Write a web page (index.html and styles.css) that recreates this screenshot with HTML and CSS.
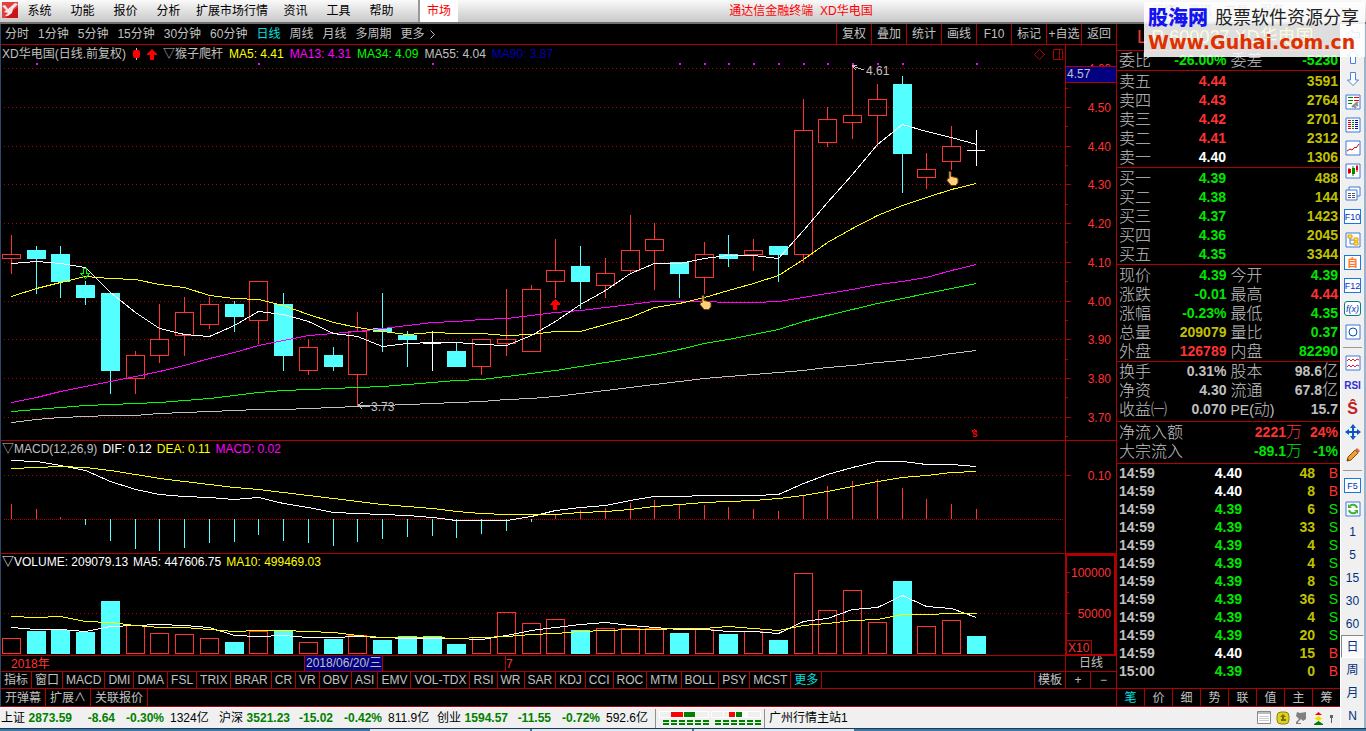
FILE: index.html
```html
<!DOCTYPE html>
<html lang="zh-CN">
<head>
  <meta charset="UTF-8">
  <meta name="viewport" content="width=device-width, initial-scale=1">
  <title>通达信金融终端 XD华电国</title>
  <link rel="stylesheet" href="styles.css">
</head>
<body>

  <!-- 顶部菜单 -->
  <header class="menubar">
    <svg class="logo" width="16" height="16" viewBox="0 0 16 16">
      <rect width="16" height="16" fill="#c81414"/>
      <path d="M0 0h16v5L9 10 4 16H0z" fill="#e04040"/>
      <path d="M0 4l3-1 3 4 7-6 3 1-5 5-1 4-4 3H3l3-3-4-1 2-2z" fill="#f4e4e4"/>
    </svg>
    <nav class="menu">
      <button>系统</button>
      <button>功能</button>
      <button>报价</button>
      <button>分析</button>
      <button>扩展市场行情</button>
      <button>资讯</button>
      <button>工具</button>
      <button>帮助</button>
    </nav>
    <button class="market">市场</button>
    <h1 class="app-title">通达信金融终端&nbsp; XD华电国</h1>
    <div class="window-tools">
      <button>行情</button>
      <button>资讯</button>
      <button>交易</button>
      <button>服务</button>
      <button>—</button>
      <button>□</button>
      <button>✕</button>
    </div>
  </header>

  <div class="workspace">
    <div class="main">
      <div class="desk">

        <!-- 图表区 -->
        <section class="charts">
          <div class="periods">
            <button>分时</button>
            <button>1分钟</button>
            <button>5分钟</button>
            <button>15分钟</button>
            <button>30分钟</button>
            <button>60分钟</button>
            <button class="active">日线</button>
            <button>周线</button>
            <button>月线</button>
            <button>多周期</button>
            <button class="more">更多
              <svg width="5" height="9" viewBox="0 0 5 9"><path d="M.5.500l4 4-4 4" fill="none" stroke="#c0c0c0"/></svg>
            </button>
            <div class="chart-actions">
              <button>复权</button>
              <button>叠加</button>
              <button>统计</button>
              <button>画线</button>
              <button>F10</button>
              <button>标记</button>
              <button>+自选</button>
              <button>返回</button>
            </div>
          </div>

          <div class="panel">
            <div class="plot">
              <div class="legend legend-main">
                <span>XD华电国(日线.前复权)</span>
                <svg class="mark-pill" width="9" height="12" viewBox="0 0 9 12"><path d="M4 0h1v12H4z" fill="#c0c0c0"/><rect x="1" y="2" width="7" height="8" rx="2" fill="#f00"/></svg>
                <svg class="mark-up" width="10" height="11" viewBox="0 0 10 11"><path d="M5 0l5 5v1H7v5H3V6H0V5z" fill="#f00"/></svg>
                <span>▽猴子爬杆</span>
                <span class="yellow">MA5: 4.41</span>
                <span class="magenta">MA13: 4.31</span>
                <span class="lime">MA34: 4.09</span>
                <span>MA55: 4.04</span>
                <span class="blue">MA90: 3.87</span>
                <svg class="mark-right" width="29" height="11" viewBox="0 0 29 11" fill="none" stroke="#b00000"><path d="M.5 5.500l5-5 5 5-5 5zM19.500.500h9v10h-9zM25.500.500v10"/></svg>
              </div>
              <svg id="kline" class="canvas" height="377"></svg>
            </div>
            <svg id="klineAxis" class="axis" height="395"></svg>
          </div>

          <div class="panel">
            <div class="plot">
              <div class="legend">
                <span>▽MACD(12,26,9)</span>
                <span class="white">DIF: 0.12</span>
                <span class="yellow">DEA: 0.11</span>
                <span class="magenta">MACD: 0.02</span>
              </div>
              <svg id="macd" class="canvas" height="96"></svg>
            </div>
            <svg id="macdAxis" class="axis" height="112"></svg>
          </div>

          <div class="panel">
            <div class="plot">
              <div class="legend">
                <span class="white">▽VOLUME: 209079.13</span>
                <span class="white">MA5: 447606.75</span>
                <span class="yellow">MA10: 499469.03</span>
              </div>
              <svg id="volume" class="canvas" height="85"></svg>
            </div>
            <svg id="volumeAxis" class="axis selected" height="101"></svg>
          </div>

          <div class="panel">
            <svg id="dates" class="canvas" height="15"></svg>
            <div class="axis axis-name">日线</div>
          </div>

          <div class="tabs">
            <button>指标</button>
            <button>窗口</button>
            <button>MACD</button>
            <button>DMI</button>
            <button>DMA</button>
            <button>FSL</button>
            <button>TRIX</button>
            <button>BRAR</button>
            <button>CR</button>
            <button>VR</button>
            <button>OBV</button>
            <button>ASI</button>
            <button>EMV</button>
            <button>VOL-TDX</button>
            <button>RSI</button>
            <button>WR</button>
            <button>SAR</button>
            <button>KDJ</button>
            <button>CCI</button>
            <button>ROC</button>
            <button>MTM</button>
            <button>BOLL</button>
            <button>PSY</button>
            <button>MCST</button>
            <button class="active">更多</button>
            <div class="tab-tools">
              <button>模板</button>
              <button class="zoom">+</button>
              <button class="zoom">−</button>
            </div>
          </div>
          <div class="tabs tabs-extra">
            <button>开弹幕</button>
            <button>扩展∧</button>
            <button>关联报价</button>
          </div>
        </section>

        <!-- 报价区 -->
        <aside class="quote">
          <h2 class="stock"><b>L</b> R 600027 XD华电国</h2>

          <table class="grid ratio">
            <tr><th>委比</th><td class="green">-26.00%</td><th>委差</th><td class="green">-5230</td></tr>
          </table>

          <table class="grid five">
            <tr><th>卖五</th><td class="red">4.44</td><td colspan="2" class="gold">3591</td></tr>
            <tr><th>卖四</th><td class="red">4.43</td><td colspan="2" class="gold">2764</td></tr>
            <tr><th>卖三</th><td class="red">4.42</td><td colspan="2" class="gold">2701</td></tr>
            <tr><th>卖二</th><td class="red">4.41</td><td colspan="2" class="gold">2312</td></tr>
            <tr><th>卖一</th><td class="white">4.40</td><td colspan="2" class="gold">1306</td></tr>
          </table>

          <table class="grid five">
            <tr><th>买一</th><td class="green">4.39</td><td colspan="2" class="gold">488</td></tr>
            <tr><th>买二</th><td class="green">4.38</td><td colspan="2" class="gold">144</td></tr>
            <tr><th>买三</th><td class="green">4.37</td><td colspan="2" class="gold">1423</td></tr>
            <tr><th>买四</th><td class="green">4.36</td><td colspan="2" class="gold">2045</td></tr>
            <tr><th>买五</th><td class="green">4.35</td><td colspan="2" class="gold">3344</td></tr>
          </table>

          <table class="grid five">
            <tr><th>现价</th><td class="green">4.39</td><th>今开</th><td class="green">4.39</td></tr>
            <tr><th>涨跌</th><td class="green">-0.01</td><th>最高</th><td class="red">4.44</td></tr>
            <tr><th>涨幅</th><td class="green">-0.23%</td><th>最低</th><td class="green">4.35</td></tr>
            <tr><th>总量</th><td class="gold">209079</td><th>量比</th><td class="green">0.37</td></tr>
            <tr><th>外盘</th><td class="red">126789</td><th>内盘</th><td class="green">82290</td></tr>
          </table>

          <table class="grid three">
            <tr><th>换手</th><td>0.31%</td><th>股本</th><td>98.6<i>亿</i></td></tr>
            <tr><th>净资</th><td>4.30</td><th>流通</th><td>67.8<i>亿</i></td></tr>
            <tr><th>收益㈠</th><td>0.070</td><th><b>PE(</b>动<b>)</b></th><td>15.7</td></tr>
          </table>

          <table class="flow">
            <tr class="red"><th>净流入额</th><td>2221<i>万</i></td><td>24%</td></tr>
            <tr class="green"><th>大宗流入</th><td>-89.1<i>万</i></td><td>-1%</td></tr>
          </table>

          <table class="ticks">
            <tr><th>14:59</th><td class="white">4.40</td><td class="gold">48</td><td class="side red">B</td></tr>
            <tr><th>14:59</th><td class="white">4.40</td><td class="gold">8</td><td class="side red">B</td></tr>
            <tr><th>14:59</th><td class="green">4.39</td><td class="gold">6</td><td class="side green">S</td></tr>
            <tr><th>14:59</th><td class="green">4.39</td><td class="gold">33</td><td class="side green">S</td></tr>
            <tr><th>14:59</th><td class="green">4.39</td><td class="gold">4</td><td class="side green">S</td></tr>
            <tr><th>14:59</th><td class="green">4.39</td><td class="gold">4</td><td class="side green">S</td></tr>
            <tr><th>14:59</th><td class="green">4.39</td><td class="gold">8</td><td class="side green">S</td></tr>
            <tr><th>14:59</th><td class="green">4.39</td><td class="gold">36</td><td class="side green">S</td></tr>
            <tr><th>14:59</th><td class="green">4.39</td><td class="gold">4</td><td class="side green">S</td></tr>
            <tr><th>14:59</th><td class="green">4.39</td><td class="gold">20</td><td class="side green">S</td></tr>
            <tr><th>14:59</th><td class="white">4.40</td><td class="gold">15</td><td class="side red">B</td></tr>
            <tr><th>15:00</th><td class="green">4.39</td><td class="gold">0</td><td class="side red">B</td></tr>
          </table>

          <div class="quote-tabs">
            <button class="active">笔</button>
            <button>价</button>
            <button>细</button>
            <button>势</button>
            <button>联</button>
            <button>值</button>
            <button>主</button>
            <button>筹</button>
          </div>
        </aside>
      </div>

      <!-- 状态栏 -->
      <footer class="status">
        <div class="index"><span>上证</span><b>2873.59</b><b>-8.64</b><b>-0.30%</b><span>1324亿</span></div>
        <div class="index"><span>沪深</span><b>3521.23</b><b>-15.02</b><b>-0.42%</b><span>811.9亿</span></div>
        <div class="index"><span>创业</span><b>1594.57</b><b>-11.55</b><b>-0.72%</b><span>592.6亿</span></div>
        <div class="meters">
          <svg width="50" height="15" viewBox="0 0 50 15" shape-rendering="crispEdges">
            <path d="M0 0h50v7H0z" fill="#fff"/><path d="M1 1h11v5H1zM37 1h12v5H37z" fill="#f0f0f0"/>
            <path d="M12 1h12v5H12z" fill="#f00"/><path d="M25 1h11v5H25z" fill="#008000"/>
            <path d="M4 10h46M4 13h46" stroke="#008000" stroke-width="2" stroke-dasharray="6 2"/>
          </svg>
          <svg width="50" height="15" viewBox="0 0 50 15" shape-rendering="crispEdges">
            <path d="M0 0h50v7H0z" fill="#fff"/><path d="M1 1h11v5H1zM13 1h5v5h-5zM37 1h12v5H37z" fill="#f0f0f0"/>
            <path d="M18 1h6v5h-6z" fill="#f00"/><path d="M25 1h6v5h-6z" fill="#008000"/>
            <path d="M4 10h46M4 13h46" stroke="#008000" stroke-width="2" stroke-dasharray="6 2"/>
          </svg>
        </div>
        <span class="server">广州行情主站1</span>
        <div class="tray">
          <svg width="14" height="14" viewBox="0 0 14 14"><path d="M.5.500h13v12H.5z" fill="#fff" stroke="#888"/><path d="M1 1h12v2H1z" fill="#bbb"/><path d="M2 5.500h10M2 7.500h10M2 9.500h10" stroke="#ccc"/></svg>
          <svg width="14" height="14" viewBox="0 0 14 14"><rect x="1" y="1" width="12" height="12" rx="4" fill="#e0d020" stroke="#8c8410"/><path d="M7 3l3 3H8v2h2v2H5V8h1V6H4z" fill="#7a7000"/></svg>
          <svg width="14" height="14" viewBox="0 0 14 14"><path d="M2 1l3 1 6-1v7l-3 2-2-2-3 3v1h3v1H1v-2l3-3-3-3z" fill="#808080"/></svg>
          <svg width="9" height="13" viewBox="0 0 9 13"><path d="M4.500 0l3.500 3H1z" fill="#f00"/><path d="M0 6h2l2.500-2L7 6h2L4.500 9z" fill="#f0e000"/><path d="M4.500 9l4.500 3v1H0v-1z" fill="#008000"/></svg>
          <svg width="7" height="13" viewBox="0 0 7 13"><path d="M2 3h3v3H4v5H3V6H2z" fill="#606060"/></svg>
        </div>
      </footer>
    </div>

    <!-- 右侧工具条 -->
    <nav class="toolbar">
      <div class="arrows">
        <button aria-label="后退"><svg width="16" height="16" viewBox="0 0 16 16" fill="#fff" stroke="#4a80e0"><path d="M1.500 8l6-5.500v3h7v5h-7v3z"/></svg></button>
        <button aria-label="上翻"><svg width="16" height="16" viewBox="0 0 16 16" fill="#fff" stroke="#4a80e0"><path d="M8 1.500L13.500 7h-3v7.500h-5V7h-3z"/></svg></button>
        <button aria-label="下翻"><svg width="16" height="16" viewBox="0 0 16 16" fill="#fff" stroke="#4a80e0"><path d="M8 14.500L13.500 9h-3V1.500h-5V9h-3z"/></svg></button>
      </div>
      <button aria-label="报价"><svg width="16" height="16" viewBox="0 0 16 16"><path class="frame" d="M1 1h14v14H1z"/><path d="M3 3.500h5M3 6.500h5M3 9.500h4" stroke="#080"/><path d="M9 3.500h5M9 6.500h5" stroke="#e00"/><path d="M7 13l6-5M8 11l3 3M10 9l3 3" stroke="#888" stroke-width="2"/></svg></button>
      <button aria-label="行情"><svg width="16" height="16" viewBox="0 0 16 16"><path class="frame" d="M1 1h14v14H1z"/><path d="M3 3.500h3M3 5.500h3M3 7.500h3M3 9.500h3M3 11.500h3" stroke="#e00"/><path d="M7 3.500h2M7 5.500h2M7 7.500h2M7 9.500h2M7 11.500h2" stroke="#080"/><path d="M10 3.500h3M10 5.500h3M10 7.500h3M10 9.500h3M10 11.500h3" stroke="#00d"/></svg></button>
      <button aria-label="分时图"><svg width="16" height="16" viewBox="0 0 16 16"><path class="frame" d="M1 1h14v14H1z"/><path d="M2 11l3-2 2 1 3-3 1 1 3-4" fill="none" stroke="#d00"/></svg></button>
      <button aria-label="K线图"><svg width="16" height="16" viewBox="0 0 16 16"><path class="frame" d="M1 1h14v14H1z"/><path d="M4 5v6M12 2v7" stroke="#d00"/><path d="M3 6h3v4H3zM11 3h2v4h-2z" fill="#d00"/><path d="M8 3v10" stroke="#080"/><path d="M7 5h3v6H7z" fill="#080"/></svg></button>
      <button aria-label="多窗口"><svg width="16" height="16" viewBox="0 0 16 16"><path class="frame" d="M4 1h11v9H4z"/><path class="frame" d="M1 4h11v10H1z"/><path d="M3 7.500h3M3 9.500h3M3 11.500h3M7 7.500h3M7 9.500h3M7 11.500h3" stroke="#556"/></svg></button>
      <button class="key">F10</button>
      <button aria-label="板块树"><svg width="16" height="16" viewBox="0 0 16 16"><path class="frame" d="M1 1h14v14H1z"/><path d="M5 6v6h4M5 8h4" fill="none" stroke="#4a80e0"/><path d="M3 3h4v3H3zM9 6h4v3H9zM9 10h4v3H9z" fill="#ffe060" stroke="#e0a000"/></svg></button>
      <button class="key self">自</button>
      <button class="key">F12</button>
      <button class="key formula">f(x)</button>
      <button aria-label="圆"><svg width="16" height="16" viewBox="0 0 16 16"><path class="frame" d="M1 1h14v14H1z"/><circle cx="8" cy="8" r="4" fill="none" stroke="#0050b0"/></svg></button>
      <hr>
      <button aria-label="指标"><svg width="16" height="16" viewBox="0 0 16 16"><path class="frame" d="M1 1h14v14H1z"/><path d="M2 6l2-2 2 2 2-2 2 2 2-2 2 1" fill="none" stroke="#e02020"/><path d="M2 12l2-2 2 2 2-2 2 2 2-2 2 1" fill="none" stroke="#d02040"/></svg></button>
      <button class="rsi">RSI</button>
      <button class="dollar">Ŝ</button>
      <button aria-label="移动"><svg width="16" height="16" viewBox="0 0 16 16"><path d="M8 0l3 4H9v3h3V5l4 3-4 3V9H9v3h2l-3 4-3-4h2V9H4v2L0 8l4-3v2h3V4H5z" fill="#0a58c0"/></svg></button>
      <button aria-label="画笔"><svg width="16" height="16" viewBox="0 0 16 16"><path d="M2 14l1-4 7-7 3 3-7 7z" fill="#f0a030" stroke="#805010"/><path d="M10 3l2-2 3 3-2 2z" fill="#e06050"/><path d="M2 14l1-2 1 1z" fill="#222"/></svg></button>
      <hr>
      <button class="key">F5</button>
      <button aria-label="刷新"><svg width="16" height="16" viewBox="0 0 16 16"><path class="frame" d="M1 1h14v14H1z"/><path d="M12 7c-1-4-6-4-7-2M4 9c1 4 6 4 7 2" fill="none" stroke="#3cb034" stroke-width="2"/><path d="M3 3v4h4zM13 13V9H9z" fill="#3cb034"/></svg></button>
      <button>1</button>
      <button>5</button>
      <button>15</button>
      <button>30</button>
      <button>60</button>
      <button class="pressed">日</button>
      <button>周</button>
      <button>月</button>
      <button>N</button>
    </nav>
  </div>

  <div class="taskbar"><span></span><span></span><span></span></div>

  <!-- 水印 -->
  <div class="watermark">
    <div class="wm-top"><strong>股海网</strong><span>股票软件资源分享</span></div>
    <div class="wm-url">Www.Guhai.com.cn</div>
  </div>

  <script src="chart.js"></script>
</body>
</html>
```
FILE: styles.css
```css
* {
  box-sizing: border-box;
}

body {
  margin: 0;
  min-height: 100vh;
  display: flex;
  flex-direction: column;
  position: relative;
  background: #000;
  color: #c0c0c0;
  font-family: "Liberation Sans", "Noto Sans CJK SC", sans-serif;
  font-size: 12px;
  line-height: 16px;
}

button {
  margin: 0;
  padding: 0;
  border: 0;
  background: none;
  color: inherit;
  font: inherit;
  white-space: nowrap;
  cursor: pointer;
}

svg {
  display: block;
  flex: none;
}

/* 颜色 */
.red { color: #ff3232; }
.green { color: #00e600; }
.gold { color: #c0c000; }
.white { color: #fff; }
.yellow { color: #ff0; }
.magenta { color: #f0f; }
.lime { color: #0f0; }
.blue { color: #0000b4; }
.active { color: #00e0e0; }

/* 顶部菜单 */
.menubar {
  height: 24px;
  display: flex;
  align-items: stretch;
  padding-left: 2px;
  background: linear-gradient(#fafafa, #c8c8c8);
  border-bottom: 2px solid #707070;
  color: #000;
}

.logo {
  margin-top: 2px;
}

.menu {
  display: flex;
}

.menu button {
  min-width: 43px;
  padding: 0 6px;
}

.market {
  width: 40px;
  margin-left: 15px;
  background: #fff;
  border-left: 2px solid #999;
  color: #f00;
}

.app-title {
  flex: 1;
  margin: 0;
  color: #f00;
  font-size: 12px;
  font-weight: normal;
  line-height: 22px;
  text-align: center;
}

.window-tools {
  width: 222px;
  display: flex;
  gap: 12px;
  padding-left: 8px;
  color: #707070;
}

/* 主体 */
.workspace {
  flex: 1;
  display: flex;
}

.main {
  flex: 1;
  min-width: 0;
  display: flex;
  flex-direction: column;
}

.desk {
  flex: 1;
  display: flex;
  border-left: 1px solid #304868;
  border-bottom: 1px solid #b00000;
}

.charts {
  flex: 1;
  min-width: 0;
}

.periods {
  height: 21px;
  display: flex;
  gap: 9px;
  padding-left: 4px;
  border-bottom: 1px solid #b00000;
}

.more {
  display: flex;
  align-items: center;
  gap: 5px;
}

.chart-actions {
  margin-left: auto;
  display: flex;
}

.chart-actions button {
  width: 35px;
  border-left: 1px solid #b00000;
}

.panel {
  display: flex;
  border-bottom: 1px solid #b00000;
}

.plot {
  flex: 1;
  min-width: 0;
}

.canvas {
  width: 100%;
  flex: 1;
  min-width: 0;
}

.axis {
  width: 51px;
  flex: none;
  border-left: 1px solid #b00000;
}

.axis.selected {
  border: 2px solid #b00000;
  border-bottom-width: 1px;
}

.axis-name {
  line-height: 15px;
  text-align: center;
}

.legend {
  height: 16px;
  display: flex;
  gap: 5px;
  padding-left: 1px;
  white-space: nowrap;
}

.legend-main {
  height: 18px;
  gap: 6px;
  align-items: center;
}

.mark-right {
  margin-left: auto;
  margin-right: 2px;
}

.canvas text,
.axis text {
  font-size: 12px;
}

.canvas .sell-mark {
  font-size: 10px;
  font-weight: bold;
}

/* 指标标签 */
.tabs {
  height: 17px;
  display: flex;
  border-bottom: 1px solid #b00000;
}

.tabs button {
  padding: 0 3px;
  border-right: 1px solid #b00000;
}

.tabs-extra {
  border-bottom: 0;
}

.tabs-extra button {
  padding: 0 4px;
}

.tab-tools {
  margin-left: auto;
  display: flex;
  border-left: 1px solid #b00000;
}

.tab-tools .zoom {
  width: 25px;
}

.tab-tools .zoom:last-child {
  border-right: 0;
}

/* 报价区 */
.quote {
  width: 224px;
  flex: none;
  display: flex;
  flex-direction: column;
  border-left: 1px solid #b00000;
}

.stock {
  height: 27px;
  margin: 0;
  padding-left: 20px;
  border-bottom: 1px solid #b00000;
  color: #e0e000;
  font-size: 18px;
  font-weight: normal;
  line-height: 26px;
  white-space: nowrap;
}

.stock b {
  color: #ff3232;
  font-weight: normal;
}

.quote table {
  width: 100%;
  table-layout: fixed;
  border-collapse: separate;
  border-spacing: 0;
  border-bottom: 1px solid #b00000;
}

.quote th,
.quote td {
  height: 19px;
  padding: 0;
  line-height: 19px;
  vertical-align: middle;
  white-space: nowrap;
}

.quote th {
  padding-left: 2px;
  color: #c0c0c0;
  font-size: 16px;
  font-weight: 300;
  text-align: left;
}

.quote td {
  padding-right: 2px;
  font-size: 14px;
  font-weight: bold;
  text-align: right;
}

.quote td i {
  font-size: 16px;
  font-style: normal;
  font-weight: 300;
  line-height: 1px;
}

.quote th b {
  font-size: 14px;
  line-height: 1px;
}

.grid th {
  width: 52px;
}

.grid td {
  width: 59px;
}

.grid td[colspan] {
  width: auto;
}

.five {
  padding-top: 1px;
}

.three {
  padding-bottom: 2px;
}

.flow {
  padding: 1px 0 2px;
}

.flow th {
  width: 80px;
}

.flow td:last-child {
  width: 36px;
}

.quote .ticks {
  border-bottom: 0;
}

.quote .ticks th,
.quote .ticks td {
  height: 18px;
  line-height: 18px;
}

.quote .ticks th {
  width: 50px;
  font-size: 14px;
  font-weight: bold;
}

.ticks td:nth-child(2) {
  width: 77px;
}

.quote .ticks .side {
  width: 23px;
  font-weight: normal;
}

.quote-tabs {
  height: 18px;
  margin-top: auto;
  display: flex;
  border-top: 1px solid #b00000;
}

.quote-tabs button {
  flex: 1;
  border-right: 1px solid #b00000;
}

.quote-tabs button:last-child {
  border-right: 0;
}

/* 状态栏 */
.status {
  height: 21px;
  display: flex;
  align-items: center;
  padding-left: 1px;
  background: #f0f0f0;
  border-top: 1px solid #fff;
  color: #000;
  white-space: nowrap;
}

.index {
  display: grid;
  grid-template-columns: 25px 46px 43px 49px 55px;
}

.index b {
  color: #008000;
  text-align: right;
}

.index span:last-child {
  padding-left: 6px;
}

.meters {
  display: flex;
  gap: 2px;
  padding: 2px 3px;
  border: solid #909090;
  border-width: 0 1px;
}

.server {
  padding-left: 4px;
}

.tray {
  margin-left: auto;
  display: flex;
  align-items: center;
  gap: 5px;
  padding-right: 5px;
}

/* 右侧工具条 */
.toolbar {
  width: 26px;
  flex: none;
  display: flex;
  flex-direction: column;
  background: #f0f0f0;
  border-left: 1px solid #fff;
  border-right: 2px solid #9ab4cc;
  color: #003080;
}

.toolbar button {
  width: 23px;
  height: 23px;
  display: flex;
  align-items: center;
  justify-content: center;
}

.toolbar .arrows button {
  height: 22px;
}

.toolbar hr {
  width: 19px;
  height: 1px;
  margin: 4px 2px 3px;
  border: 0;
  background: #999;
}

.frame {
  fill: #fff;
  stroke: #3a7ae0;
}

.toolbar .key {
  width: 17px;
  height: 15px;
  margin: 4px 3px;
  background: #fff;
  border: 1px solid #1878e0;
  color: #0030c0;
  font-size: 9px;
}

.toolbar .self {
  color: #ff7830;
  font-size: 11px;
  font-weight: bold;
}

.toolbar .formula {
  border-color: #008080;
  border-radius: 3px;
  font-style: italic;
}

.toolbar .rsi {
  color: #3030d0;
  font-size: 10px;
  font-weight: bold;
}

.toolbar .dollar {
  color: #c02020;
  font-size: 16px;
  font-weight: bold;
}

.toolbar .pressed {
  background: #fafafa;
  border: 1px solid #fff;
  border-top-color: #888;
  border-left-color: #888;
}

/* 任务栏 */
.taskbar {
  height: 3px;
  display: flex;
  gap: 2px;
  padding-left: 370px;
  background: #3a78a8;
  border-top: 1px solid #203850;
}

.taskbar span {
  width: 160px;
  background: #d8e8f4;
}

/* 水印 */
.watermark {
  position: absolute;
  top: 2px;
  right: 1px;
  width: 221px;
  height: 55px;
  padding: 4px 0 0 4px;
  background: rgba(255, 255, 255, 0.87);
  white-space: nowrap;
}

.wm-top {
  display: flex;
  align-items: center;
  gap: 7px;
  height: 24px;
}

.wm-top strong {
  color: #1414f0;
  font-size: 20px;
  font-weight: 900;
}

.wm-top span {
  color: #222;
  font-size: 18px;
}

.wm-url {
  color: #e03000;
  font-family: "DejaVu Sans", sans-serif;
  font-size: 19px;
  font-weight: bold;
  line-height: 24px;
}
```
FILE: chart.js
```js
const RED = '#ff3232';
const CYAN = '#54ffff';
const LINE = '#b00000';

// 开, 收, 低, 高
const bars = [
  [4.11, 4.12, 4.07, 4.17], [4.13, 4.11, 4.02, 4.14], [4.12, 4.05, 4.01, 4.14], [4.04, 4.01, 3.99, 4.05],
  [4.02, 3.82, 3.76, 4.02], [3.80, 3.86, 3.76, 3.87], [3.86, 3.90, 3.84, 3.99], [3.91, 3.97, 3.86, 4.01],
  [3.94, 3.99, 3.93, 4.01], [3.99, 3.96, 3.92, 4.00], [3.95, 4.05, 3.89, 4.05], [3.99, 3.86, 3.82, 4.02],
  [3.82, 3.88, 3.81, 3.90], [3.86, 3.83, 3.82, 3.88], [3.81, 3.92, 3.73, 3.97], [3.93, 3.92, 3.87, 4.02],
  [3.91, 3.90, 3.83, 3.92], [3.89, 3.89, 3.82, 3.92], [3.87, 3.83, 3.83, 3.89], [3.83, 3.90, 3.81, 3.90],
  [3.89, 3.90, 3.86, 4.03], [3.87, 4.03, 3.87, 4.04], [4.05, 4.08, 4.01, 4.16], [4.09, 4.05, 3.98, 4.14],
  [4.04, 4.07, 4.01, 4.11], [4.08, 4.13, 4.07, 4.22], [4.13, 4.16, 4.03, 4.20], [4.10, 4.07, 4.01, 4.10],
  [4.06, 4.12, 4.02, 4.15], [4.12, 4.11, 4.09, 4.17], [4.12, 4.13, 4.08, 4.16], [4.14, 4.12, 4.05, 4.14],
  [4.12, 4.44, 4.10, 4.52], [4.41, 4.47, 4.40, 4.50], [4.46, 4.48, 4.42, 4.61], [4.48, 4.52, 4.40, 4.56],
  [4.56, 4.38, 4.28, 4.58], [4.32, 4.34, 4.29, 4.38], [4.36, 4.40, 4.34, 4.45], [4.39, 4.39, 4.35, 4.44]
];

const averages = {
  '#c0c0c0': [422, 419, 417, 416, 415, 415, 413, 412, 411, 410, 409, 409, 408, 407, 406, 405, 404, 403, 402, 401, 399, 398, 396, 393, 390, 387, 384, 381, 378, 376, 374, 372, 370, 367, 365, 362, 360, 357, 353, 350],
  '#00ff00': [411, 409, 407, 405, 404, 403, 402, 400, 398, 395, 392, 390, 389, 388, 387, 386, 384, 382, 380, 379, 376, 373, 370, 366, 362, 358, 354, 349, 343, 339, 334, 329, 321, 315, 309, 303, 298, 293, 288, 283],
  '#ff00ff': [402, 397, 391, 386, 381, 376, 371, 365, 358, 352, 345, 340, 335, 333, 331, 328, 325, 322, 321, 319, 318, 315, 312, 310, 307, 304, 301, 301, 301, 302, 302, 301, 297, 293, 289, 284, 281, 277, 270, 264],
  '#ffff00': [296, 288, 282, 276, 278, 279, 284, 287, 295, 298, 299, 305, 314, 322, 327, 331, 334, 332, 333, 333, 335, 334, 331, 331, 324, 317, 307, 303, 297, 290, 283, 275, 259, 242, 228, 215, 205, 197, 189, 183],
  '#ffffff': [263, 261, 263, 267, 292, 312, 328, 334, 336, 325, 311, 314, 321, 333, 336, 346, 343, 342, 342, 344, 345, 335, 321, 304, 290, 273, 263, 263, 258, 255, 255, 258, 230, 202, 174, 144, 124, 131, 137, 144]
};

const macd = [504, 509, 517, 525, 541, 549, 551, 548, 543, 542, 535, 541, 543, 546, 542, 539, 537, 536, 538, 534, 531, 522, 514, 510, 508, 503, 500, 504, 505, 507, 509, 511, 495, 486, 481, 479, 488, 499, 504, 509];
const dif = [460, 461, 465, 470, 481, 489, 494, 496, 497, 499, 497, 503, 507, 512, 513, 514, 515, 517, 520, 520, 520, 516, 510, 507, 505, 500, 496, 496, 495, 495, 495, 494, 483, 474, 467, 461, 461, 464, 464, 466];
const dea = [468, 467, 466, 467, 470, 474, 478, 481, 484, 487, 489, 492, 495, 498, 501, 504, 506, 508, 511, 513, 514, 514, 514, 512, 511, 509, 506, 504, 502, 501, 500, 498, 495, 491, 486, 481, 477, 475, 472, 471];

const volume = [638, 631, 630, 632, 601, 625, 633, 634, 638, 642, 631, 631, 642, 639, 635, 640, 636, 636, 644, 637, 612, 623, 619, 630, 628, 628, 628, 633, 629, 634, 631, 640, 573, 610, 590, 622, 581, 626, 620, 636];
const volume5 = [627, 629, 629, 631, 626, 625, 624, 625, 627, 635, 636, 635, 637, 637, 636, 637, 638, 638, 638, 639, 635, 630, 627, 624, 622, 625, 627, 629, 629, 631, 631, 633, 621, 618, 609, 607, 595, 606, 608, 617];
const volume10 = [616, 617, 616, 621, 622, 625, 627, 627, 629, 631, 630, 630, 631, 632, 635, 637, 637, 637, 638, 637, 636, 634, 633, 631, 630, 629, 629, 628, 628, 626, 628, 630, 625, 623, 620, 619, 614, 614, 613, 613];

const x = i => Math.floor(11.5 + i * 24.74);
const y = price => Math.round(107 + (4.5 - price) * 387);

const hline = (x1, x2, yy, color) => `<path d="M${x1} ${yy}.5H${x2}" stroke="${color}"/>`;
const vline = (xx, y1, y2, color) => `<path d="M${xx}.5 ${y1}V${y2}" stroke="${color}"/>`;
const dots = (yy, dash) => `<line x1="4" x2="100%" y1="${yy}.5" y2="${yy}.5" stroke="${LINE}" stroke-dasharray="${dash}"/>`;
const box = (xx, yy, w, h, color) => `<rect x="${xx}.5" y="${yy}.5" width="${w}" height="${h}" fill="none" stroke="${color}"/>`;
const solid = (xx, yy, w, h, color) => `<rect x="${xx}" y="${yy}" width="${w}" height="${h}" fill="${color}"/>`;
const text = (xx, yy, s, color, anchor) => `<text x="${xx}" y="${yy}" fill="${color}" text-anchor="${anchor || 'start'}">${s}</text>`;
const curve = (ys, color) => `<polyline fill="none" stroke="${color}" points="${ys.map((v, i) => `${x(i)}.5,${v}.5`).join(' ')}"/>`;

// 各图共用同一坐标, 这里平移到自己的左上角
function draw(id, left, top, content) {
  document.getElementById(id).innerHTML =
    `<g transform="translate(${-left} ${-top})" shape-rendering="crispEdges">${content}</g>`;
}

function hand(cx, cy) {
  return `<path transform="translate(${cx - 6} ${cy - 7})" shape-rendering="auto" fill="#ffd078" stroke="#6a3c10"
    d="M3 .5h2v5l5 1 2 1v4l-2 3H5L1 9.500 2 7l1 1z"/>`;
}

// K线
let k = '';
for (let p = 46; p >= 37; p--) k += dots(y(p / 10), '1 3');
bars.forEach(([open, close, low, high], i) => {
  const cx = x(i);
  const top = y(Math.max(open, close));
  const bottom = y(Math.min(open, close));
  if (open === close) {
    k += vline(cx, y(high), y(low) + 1, '#fff') + hline(cx - 9, cx + 9, top, '#fff');
  } else if (close > open) {
    k += vline(cx, y(high), top, RED) + vline(cx, bottom, y(low) + 1, RED);
    k += box(cx - 9, top, 18, bottom - top, RED);
  } else {
    k += vline(cx, y(high), y(low) + 1, CYAN) + solid(cx - 9, top, 19, bottom - top + 1, CYAN);
  }
});
for (const color in averages) k += curve(averages[color], color);
[1, 10, 17, 27, 28, 29, 30, 31, 32, 33, 34, 35, 36, 39].forEach(i => {
  k += solid(x(i), 63, 2, 2, '#f0f');
});
k += '<path d="M857 65l-5 1 4 4M852 66l12 4M363 402l-5 3 4 4M358 405.500h12" fill="none" stroke="#c0c0c0"/>';
k += text(866, 75, '4.61', '#c0c0c0') + text(371, 411, '3.73', '#c0c0c0');
k += '<path d="M83.500 268.500h3v5h3l-4 5-5-5h3z" fill="none" stroke="#0f0"/>';
k += '<path d="M555 299l5 5v1h-3v5h-4v-5h-3v-1z" fill="#f00"/>';
k += hand(705, 302) + hand(952, 178);
k += '<path d="M972 431.500l2.500-2 2.500 2" fill="none" stroke="#f00"/>';
k += '<text class="sell-mark" x="972" y="437" fill="#f00">s</text>';
draw('kline', 1, 63, k);

// 价格坐标
let axis = '';
for (let p = 46; p >= 37; p--) {
  axis += hline(1066, 1071, y(p / 10), LINE) + hline(1066, 1068, y(p / 10 - 0.05), LINE);
  axis += text(1111, y(p / 10) + 5, (p / 10).toFixed(2), RED, 'end');
}
axis += solid(1066, 66, 50, 17, LINE) + solid(1066, 67, 50, 15, '#000080') + text(1067, 78, '4.57', '#c0c0c0');
draw('klineAxis', 1066, 45, axis);

// MACD
let m = dots(475, '1 3') + dots(519, '1 1');
macd.forEach((v, i) => {
  m += v < 519 ? vline(x(i), v, 519, RED) : vline(x(i), 519, v, CYAN);
});
m += curve(dif, '#fff') + curve(dea, '#ff0');
draw('macd', 1, 457, m);
draw('macdAxis', 1066, 441, hline(1066, 1071, 475, LINE) + text(1111, 480, '0.10', RED, 'end'));

// 成交量
let v = dots(613, '1 3');
volume.forEach((top, i) => {
  const up = bars[i][1] > bars[i][0];
  v += up ? box(x(i) - 9, top, 18, 653 - top, RED) : solid(x(i) - 9, top, 19, 654 - top, CYAN);
});
v += curve(volume5, '#fff') + curve(volume10, '#ff0');
draw('volume', 1, 570, v);

draw('volumeAxis', 1067, 556,
  hline(1067, 1070, 572, LINE) + hline(1067, 1069, 592, LINE) + hline(1067, 1070, 613, LINE) +
  text(1111, 577, '100000', RED, 'end') + text(1111, 618, '50000', RED, 'end') +
  box(1066, 640, 25, 14, LINE) + text(1068, 652, 'X10', RED));

// 日期
draw('dates', 1, 656,
  text(11, 668, '2018年', RED) +
  box(304, 655, 78, 16, LINE) + solid(305, 656, 77, 15, '#000080') + text(306, 667, '2018/06/20/三', '#c0c0c0') +
  vline(505, 656, 671, LINE) + text(506, 668, '7', RED));
```
